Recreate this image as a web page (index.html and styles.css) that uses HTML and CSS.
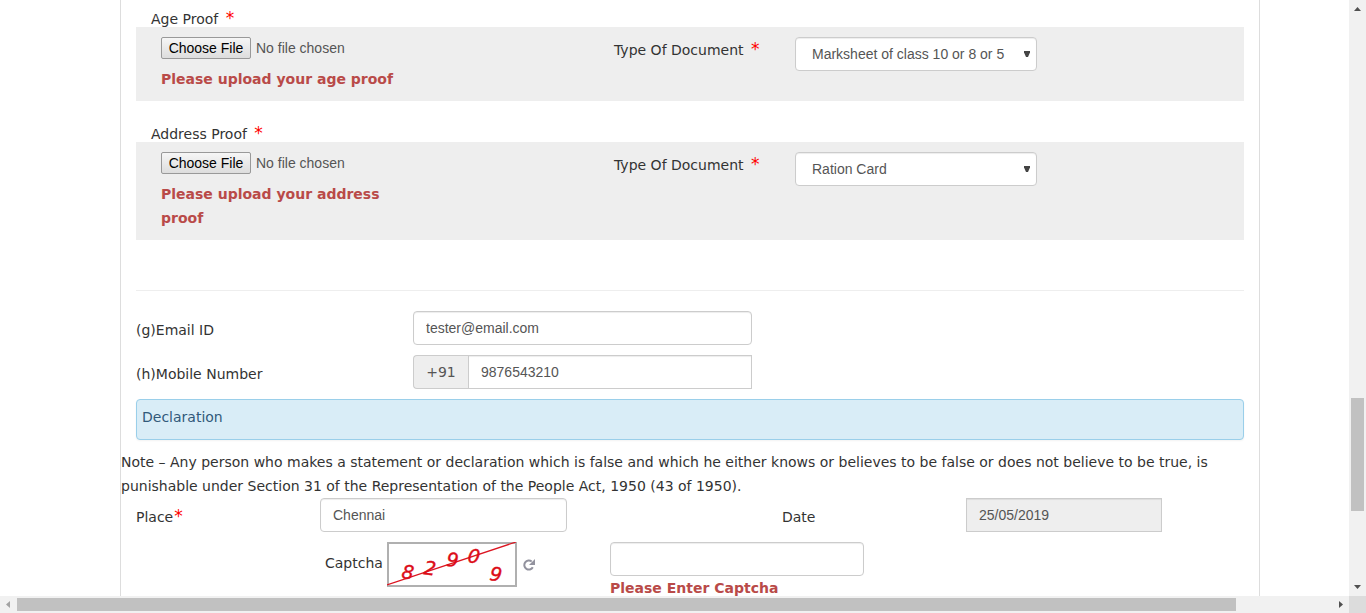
FILE: index.html
```html
<!DOCTYPE html>
<html lang="en">
<head>
<meta charset="utf-8">
<title>Application Form</title>
<link rel="stylesheet" href="styles.css">
</head>
<body>
<div class="window">
  <main class="view">
    <form class="form">
      <section class="proof">
        <label class="proof-title" for="age">Age Proof <span class="req">*</span></label>
        <div class="panel">
          <div class="upload">
            <input class="file" type="file" id="age">
            <p class="error">Please upload your age proof</p>
          </div>
          <label class="doc-label" for="age-doc">Type Of Document <span class="req">*</span></label>
          <div class="select-wrap">
            <select class="control select" id="age-doc"><option>Marksheet of class 10 or 8 or 5</option></select>
            <svg class="arrow" viewBox="0 0 6 6" aria-hidden="true"><path d="M0 0h6v1.500L4 6H2L0 1.500z"/></svg>
          </div>
        </div>
      </section>
      <section class="proof">
        <label class="proof-title" for="address">Address Proof <span class="req">*</span></label>
        <div class="panel">
          <div class="upload">
            <input class="file" type="file" id="address">
            <p class="error">Please upload your address proof</p>
          </div>
          <label class="doc-label" for="address-doc">Type Of Document <span class="req">*</span></label>
          <div class="select-wrap">
            <select class="control select" id="address-doc"><option>Ration Card</option></select>
            <svg class="arrow" viewBox="0 0 6 6" aria-hidden="true"><path d="M0 0h6v1.500L4 6H2L0 1.500z"/></svg>
          </div>
        </div>
      </section>
      <hr class="rule">
      <div class="contact">
        <label for="email">(g)Email ID</label>
        <input class="control" type="email" id="email" value="tester@email.com">
        <label for="mobile">(h)Mobile Number</label>
        <div class="phone">
          <span class="prefix">+91</span>
          <input class="control phone-input" type="tel" id="mobile" value="9876543210">
        </div>
      </div>
      <h2 class="declaration">Declaration</h2>
      <p class="note">Note – Any person who makes a statement or declaration which is false and which he either knows or believes to be false or does not believe to be true, is punishable under Section 31 of the Representation of the People Act, 1950 (43 of 1950).</p>
      <div class="signing">
        <label for="place">Place<span class="req req-tight">*</span></label>
        <input class="control" type="text" id="place" value="Chennai">
        <label class="date-label" for="date">Date</label>
        <input class="control locked" type="text" id="date" value="25/05/2019" readonly>
      </div>
      <div class="captcha">
        <div class="captcha-code">
          <label class="captcha-label" for="captcha">Captcha</label>
          <svg class="captcha-image" viewBox="0 0 130 45" role="img" aria-label="Captcha code">
            <rect x="1" y="1" width="128" height="43" fill="#fff" stroke="#b0b0b0" stroke-width="2"/>
            <path d="M0 43L129 0" stroke="#dc1420" stroke-width="1.200"/>
            <g class="captcha-digits">
              <text transform="translate(14 36) rotate(8)">8</text>
              <text transform="translate(36 32) rotate(8)">2</text>
              <text transform="translate(59 24) rotate(5)">9</text>
              <text transform="translate(80 20) rotate(8)">0</text>
              <text transform="translate(102 38) rotate(8)">9</text>
            </g>
          </svg>
          <button class="refresh" type="button" aria-label="Refresh captcha">
            <svg viewBox="0 0 12 12" aria-hidden="true"><path d="M8.700 2.600A4.500 4.500 0 1 0 9.800 8.200" fill="none" stroke="#92929e" stroke-width="2"/><path d="M12 0v6H6z" fill="#92929e"/></svg>
          </button>
        </div>
        <div class="captcha-entry">
          <input class="control" type="text" id="captcha">
          <p class="error captcha-error">Please Enter Captcha</p>
        </div>
      </div>
    </form>
  </main>
  <div class="bar bar-v" aria-hidden="true">
    <svg class="tip" viewBox="0 0 17 17"><path d="M5 11h7L8.500 7z"/></svg>
    <div class="track track-v"><div class="thumb"></div></div>
    <svg class="tip" viewBox="0 0 17 17"><path d="M5 6h7L8.500 10z"/></svg>
  </div>
  <div class="bar bar-h" aria-hidden="true">
    <svg class="tip tip-off" viewBox="0 0 17 17"><path d="M10 5v7L6 8.500z"/></svg>
    <div class="track track-h"><div class="thumb"></div></div>
    <svg class="tip" viewBox="0 0 17 17"><path d="M7 5v7L11 8.500z"/></svg>
  </div>
  <div class="corner"></div>
</div>
</body>
</html>
```
FILE: styles.css
```css
* { box-sizing: border-box; }

body {
  margin: 0;
  background: #fff;
  color: #333;
  font: 14px/24px Verdana, "DejaVu Sans", sans-serif;
}

.window {
  display: grid;
  grid-template-columns: minmax(0, 1fr) 17px;
  grid-template-rows: minmax(0, 1fr) 17px;
  height: 100vh;
}

.view {
  overflow: hidden;
  padding: 0 89px 0 120px;
}

.form {
  min-height: 100%;
  padding: 7px 15px 0;
  border: solid #ddd;
  border-width: 0 1px;
}

.req {
  margin-left: 3px;
  color: #f00;
  font-size: 17px;
  line-height: 1;
}

.req-tight { margin-left: 1px; }

.proof + .proof { margin-top: 21px; }

.proof-title {
  display: block;
  height: 20px;
  padding-left: 15px;
  line-height: 24px;
}

.panel {
  display: grid;
  grid-template-columns: 240fr 213fr 181fr 242fr 182fr;
  align-items: start;
  padding: 10px 25px;
  background: #eee;
}

.file {
  display: block;
  width: 100%;
  height: 22px;
  color: #555;
  font: 14px/20px "Liberation Sans", Arial, sans-serif;
}

.file::file-selector-button {
  width: 90px;
  height: 22px;
  margin: 0 5px 0 0;
  padding: 0;
  border: 1px solid #999;
  border-radius: 2px;
  background: linear-gradient(#f6f6f6, #ddd);
  color: #000;
  font: inherit;
}

.error {
  margin: 8px 0 0;
  color: #b94a48;
  font-weight: bold;
}

.doc-label { grid-column: 3; padding-top: 1px; }

.select-wrap {
  position: relative;
  grid-column: 4;
}

.control {
  display: block;
  width: 100%;
  height: 34px;
  padding: 6px 12px;
  border: 1px solid #ccc;
  border-radius: 4px;
  background: #fff;
  box-shadow: inset 0 1px 1px rgba(0, 0, 0, .075);
  color: #555;
  font: 14px/20px "Liberation Sans", Arial, sans-serif;
}

.select {
  appearance: none;
  padding-left: 16px;
}

.arrow {
  position: absolute;
  top: 14px;
  right: 7px;
  width: 6px;
  height: 6px;
  fill: #444;
}

.rule {
  margin: 50px 0 20px;
  border: 0;
  border-top: 1px solid #eee;
}

.contact {
  display: grid;
  grid-template-columns: 277fr 339fr 492fr;
  row-gap: 10px;
  align-items: center;
}

.contact > label { grid-column: 1; padding-top: 4px; }

.phone { display: flex; }

.prefix {
  flex: none;
  width: 55px;
  height: 34px;
  border: 1px solid #ccc;
  border-right: 0;
  border-radius: 4px 0 0 4px;
  background: #eee;
  color: #555;
  line-height: 32px;
  text-align: center;
}

.phone-input { border-radius: 0; }

.declaration {
  margin: 10px 0;
  padding: 5px 5px 10px;
  border: 1px solid #9acfea;
  border-radius: 4px;
  background: #d9edf7;
  box-shadow: 0 1px 2px rgba(0, 0, 0, .05);
  color: #31597a;
  font-size: 14px;
  font-weight: normal;
}

.note { margin: 0 -15px; }

.signing {
  display: grid;
  grid-template-columns: 184fr 247fr 215fr 184fr 196fr 82fr;
  align-items: center;
}

.signing > label { padding-top: 4px; }
.date-label { grid-column: 4; }

.locked { border-radius: 0; background: #eee; }

.captcha {
  display: grid;
  grid-template-columns: 189fr 285fr 254fr 380fr;
  align-items: start;
  margin-top: 10px;
}

.captcha-code {
  display: flex;
  grid-column: 2;
  align-items: center;
  gap: 4px;
}

.captcha-label { padding-bottom: 4px; }

.captcha-image { flex: none; width: 130px; height: 45px; }

.captcha-digits {
  fill: #dc0c18;
  stroke: #dc0c18;
  stroke-width: .4;
  font: italic 19px "DejaVu Sans", sans-serif;
}

.refresh {
  display: flex;
  padding: 2px;
  border: 0;
  background: none;
}

.refresh svg { width: 12px; height: 12px; }

.captcha-error { margin: 0; }

.bar { display: flex; background: #f1f1f1; }
.bar-v { flex-direction: column; }
.track { display: flex; flex: 1; }
.track-v { flex-direction: column; padding: 0 2px; }
.track-h { padding: 2px 0; }
.thumb { background: #c1c1c1; }
.track-v::before { content: ""; flex: 381; }
.track-v .thumb { flex: 113; }
.track-v::after { content: ""; flex: 68; }
.track-h .thumb { flex: 1219; }
.track-h::after { content: ""; flex: 96; }
.tip { flex: none; width: 17px; height: 17px; fill: #505050; }
.tip-off { fill: #a3a3a3; }
.corner { background: #dcdcdc; }
```
